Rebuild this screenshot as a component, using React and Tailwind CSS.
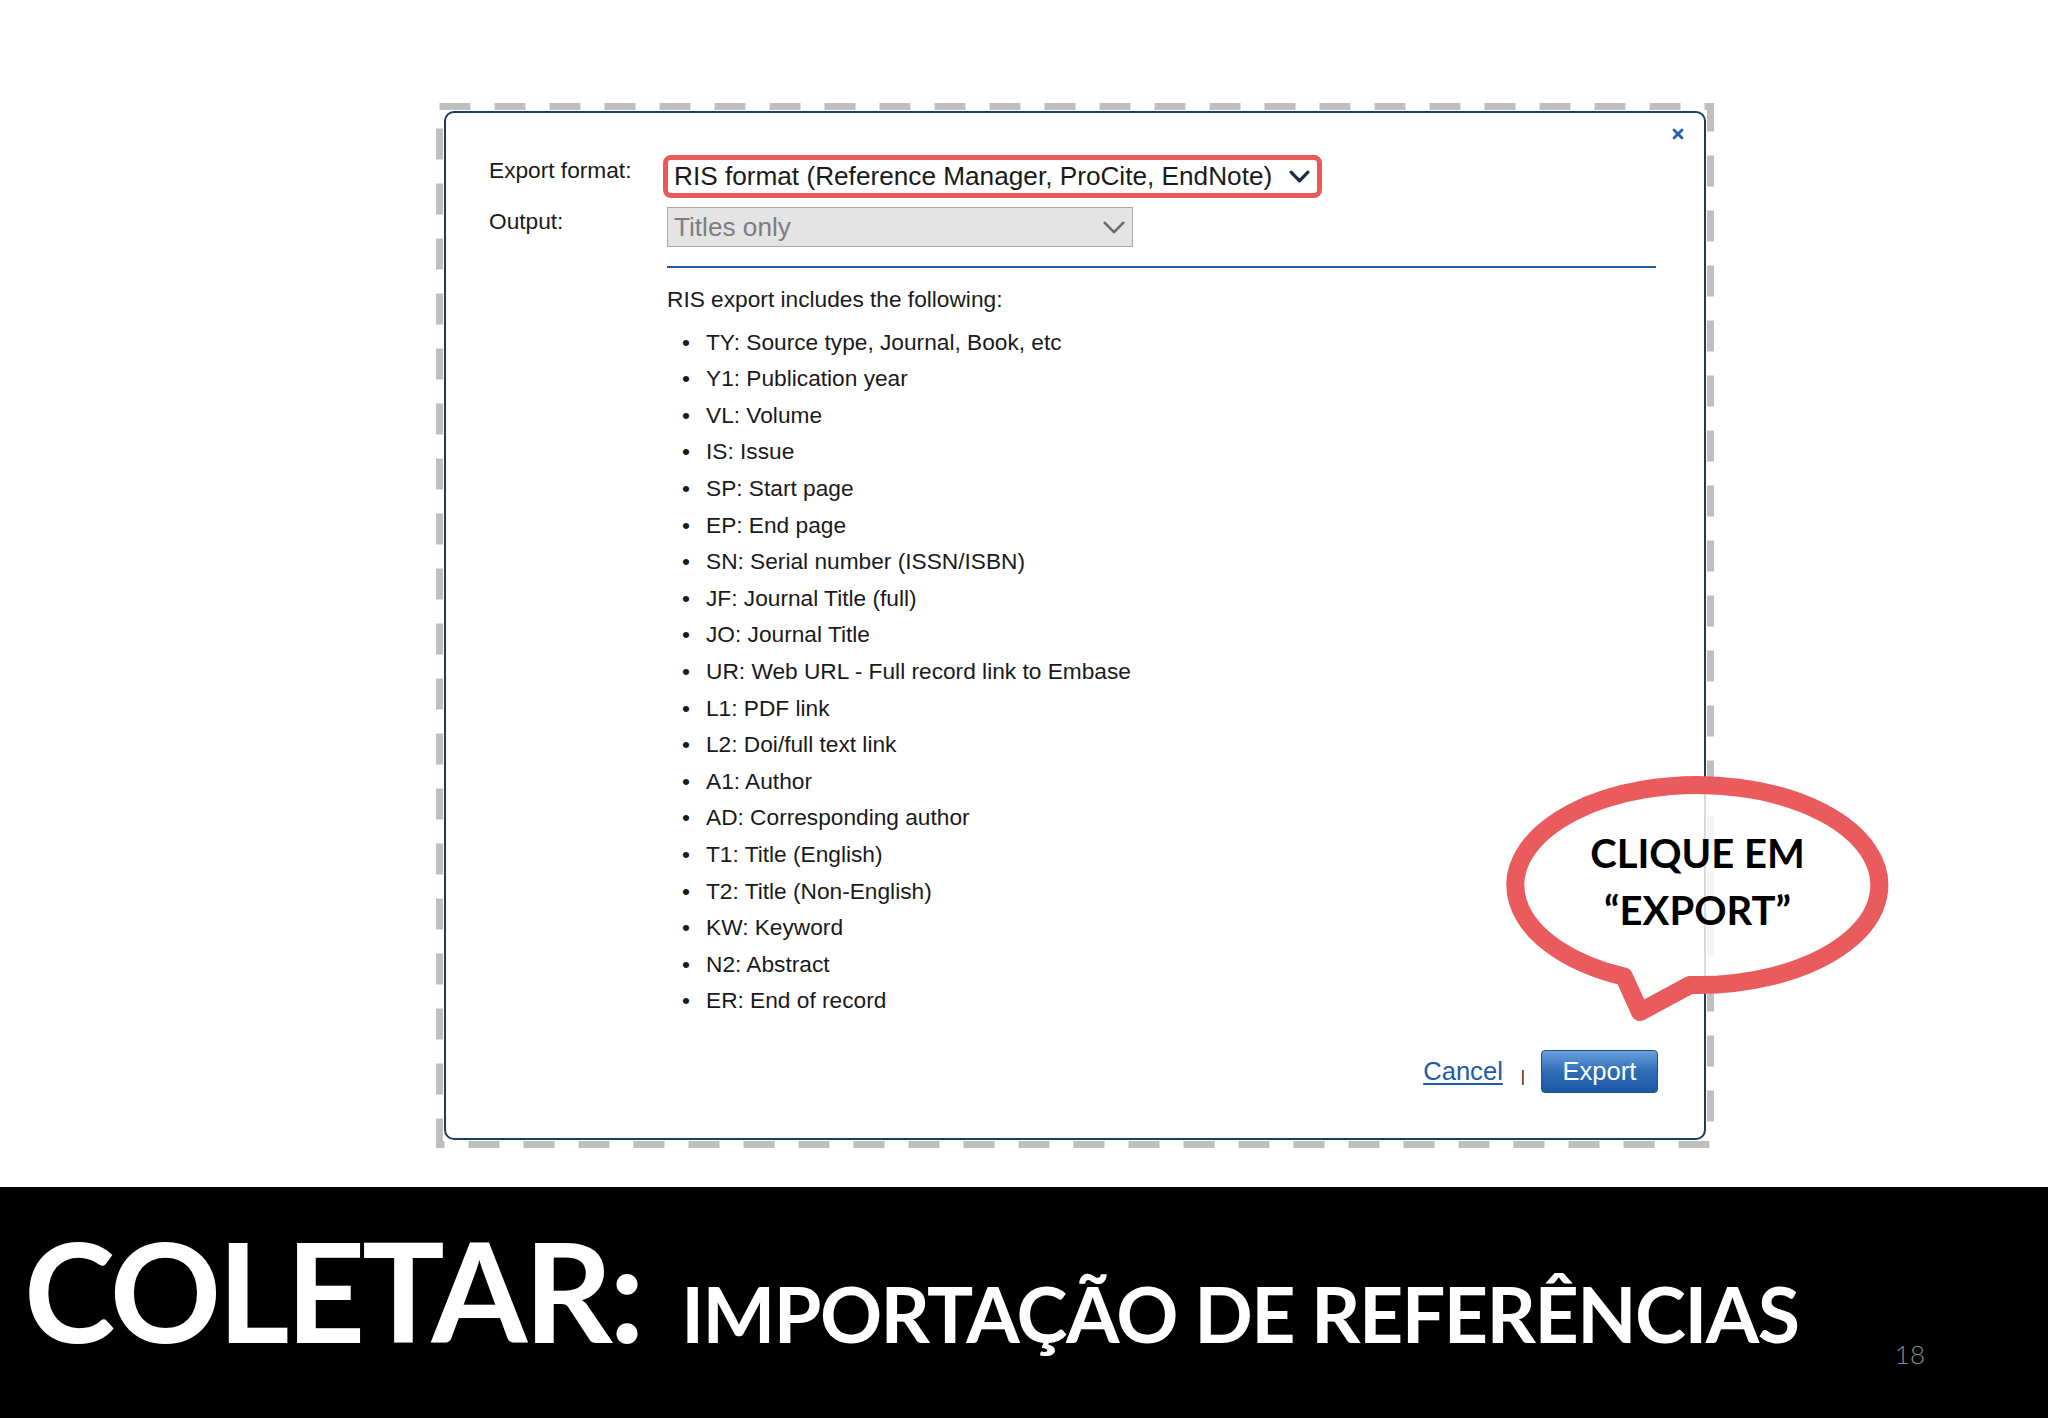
const items = [
  "TY: Source type, Journal, Book, etc",
  "Y1: Publication year",
  "VL: Volume",
  "IS: Issue",
  "SP: Start page",
  "EP: End page",
  "SN: Serial number (ISSN/ISBN)",
  "JF: Journal Title (full)",
  "JO: Journal Title",
  "UR: Web URL - Full record link to Embase",
  "L1: PDF link",
  "L2: Doi/full text link",
  "A1: Author",
  "AD: Corresponding author",
  "T1: Title (English)",
  "T2: Title (Non-English)",
  "KW: Keyword",
  "N2: Abstract",
  "ER: End of record",
];

function Chevron({ color, w, h, sw }) {
  return (
    <svg width={w} height={h} viewBox={`0 0 ${w} ${h}`}>
      <polyline
        points={`${sw / 2 + 0.5},${sw / 2 + 0.5} ${w / 2},${h - sw / 2 - 0.5} ${w - sw / 2 - 0.5},${sw / 2 + 0.5}`}
        fill="none"
        stroke={color}
        strokeWidth={sw}
        strokeLinecap="round"
        strokeLinejoin="round"
      />
    </svg>
  );
}

export default function App() {
  return (
    <div className="relative w-[2048px] h-[1418px] bg-white flex flex-col overflow-hidden">
      {/* Top area with dialog */}
      <div className="h-[1187px] pt-[103px] pl-[436px] shrink-0">
        <div className="relative w-[1278px] h-[1045px] p-[8px]">
          <svg className="absolute left-0 top-0" width="1278" height="1045">
            <rect
              x="3.5"
              y="3.5"
              width="1271"
              height="1038"
              fill="none"
              stroke="#bfbfbf"
              strokeWidth="7"
              strokeDasharray="31 24"
            />
          </svg>
          <div
            className="relative h-full bg-white border-2 border-[#1b3d63] rounded-[10px] pl-[43px] pt-[42px] flex flex-col text-[#1a1a1a]"
            style={{ fontFamily: '"Liberation Sans", Arial, sans-serif' }}
          >
            <svg className="absolute right-[20px] top-[15px]" width="12" height="12" viewBox="0 0 12 12">
              <path d="M2 2 L10 10 M10 2 L2 10" stroke="#2a5db0" strokeWidth="2.8" strokeLinecap="round" />
            </svg>

            {/* Row 1 */}
            <div className="flex items-start">
              <div className="w-[174px] mt-[2px] text-[22.7px] leading-[26px]">Export format:</div>
              <div className="w-[659px] h-[43px] border-[5px] border-[#e9585b] rounded-[8px] bg-white flex items-center pl-[6px] pr-[7px]">
                <span className="flex-1 text-[26.2px] leading-none text-[#1a1a1a]">
                  RIS format (Reference Manager, ProCite, EndNote)
                </span>
                <Chevron color="#1c2a44" w={21} h={13} sw={3.2} />
              </div>
            </div>

            {/* Row 2 */}
            <div className="flex items-start mt-[9px]">
              <div className="w-[178px] mt-[1px] text-[22.7px] leading-[26px]">Output:</div>
              <div className="w-[466px] h-[40px] border border-[#a9a9a9] bg-[#e4e4e4] flex items-center pl-[6px] pr-[7px]">
                <span className="flex-1 text-[26.2px] leading-none text-[#7d7d7d]">Titles only</span>
                <Chevron color="#6b6b6b" w={22} h={13} sw={2.6} />
              </div>
            </div>

            {/* Blue line */}
            <div className="ml-[178px] mt-[19px] w-[989px] h-[2px] bg-[#1f5da6]" />

            <div className="ml-[178px] mt-[12.7px] text-[22.7px] leading-[36.6px]">
              RIS export includes the following:
            </div>

            <ul className="ml-[178px] mt-[6.4px] text-[22.7px] leading-[36.6px]">
              {items.map((t) => (
                <li key={t} className="flex">
                  <span className="w-[39px] pl-[15px] shrink-0">•</span>
                  <span>{t}</span>
                </li>
              ))}
            </ul>

            {/* Footer */}
            <div className="flex justify-end items-center pr-[46px] mt-[31px]">
              <span className="text-[25.6px] leading-none text-[#1f5aa6] underline underline-offset-[3px] decoration-[1.5px]">
                Cancel
              </span>
              <span className="text-[16px] leading-none text-[#111] ml-[18px] mr-[16px] mt-[12px]">|</span>
              <div className="w-[117px] h-[43px] rounded-[4px] border border-[#1c4f8f] bg-gradient-to-b from-[#6a9fdc] via-[#2f6cb6] to-[#1b58a3] flex items-center justify-center text-white text-[25.6px] leading-none">
                Export
              </div>
            </div>
          </div>
        </div>
      </div>

      {/* Bottom band */}
      <div
        className="flex-1 bg-black flex items-baseline pl-[24px] pt-[34px] text-white"
        style={{ fontFamily: 'Lato, "Open Sans", sans-serif' }}
      >
        <span className="text-[138px] font-bold leading-none tracking-[-0.025em]">COLETAR:</span>
        <span className="ml-[40px] text-[77px] font-bold leading-none tracking-[-0.02em]">
          IMPORTAÇÃO DE REFERÊNCIAS
        </span>
        <span className="ml-auto mr-[123px] self-start mt-[120px] text-[26px] leading-none text-[#8a8a8a] font-light">
          18
        </span>
      </div>

      {/* Speech bubble */}
      <svg className="absolute left-[1490px] top-[760px] pointer-events-none" width="420" height="280">
        <path
          d="M 134 216.6 L 150 252 L 200 225 A 182 100 0 1 0 134 216.6 Z"
          fill="#ffffff"
          fillOpacity="0.82"
          stroke="#ea5b5e"
          strokeWidth="18"
          strokeLinejoin="round"
        />
      </svg>
      <div
        className="absolute left-[1506px] top-[825px] w-[383px] text-center text-black text-[40px] font-bold leading-[57px]"
        style={{ fontFamily: 'Lato, "Open Sans", sans-serif' }}
      >
        <div>CLIQUE EM</div>
        <div>“EXPORT”</div>
      </div>
    </div>
  );
}
